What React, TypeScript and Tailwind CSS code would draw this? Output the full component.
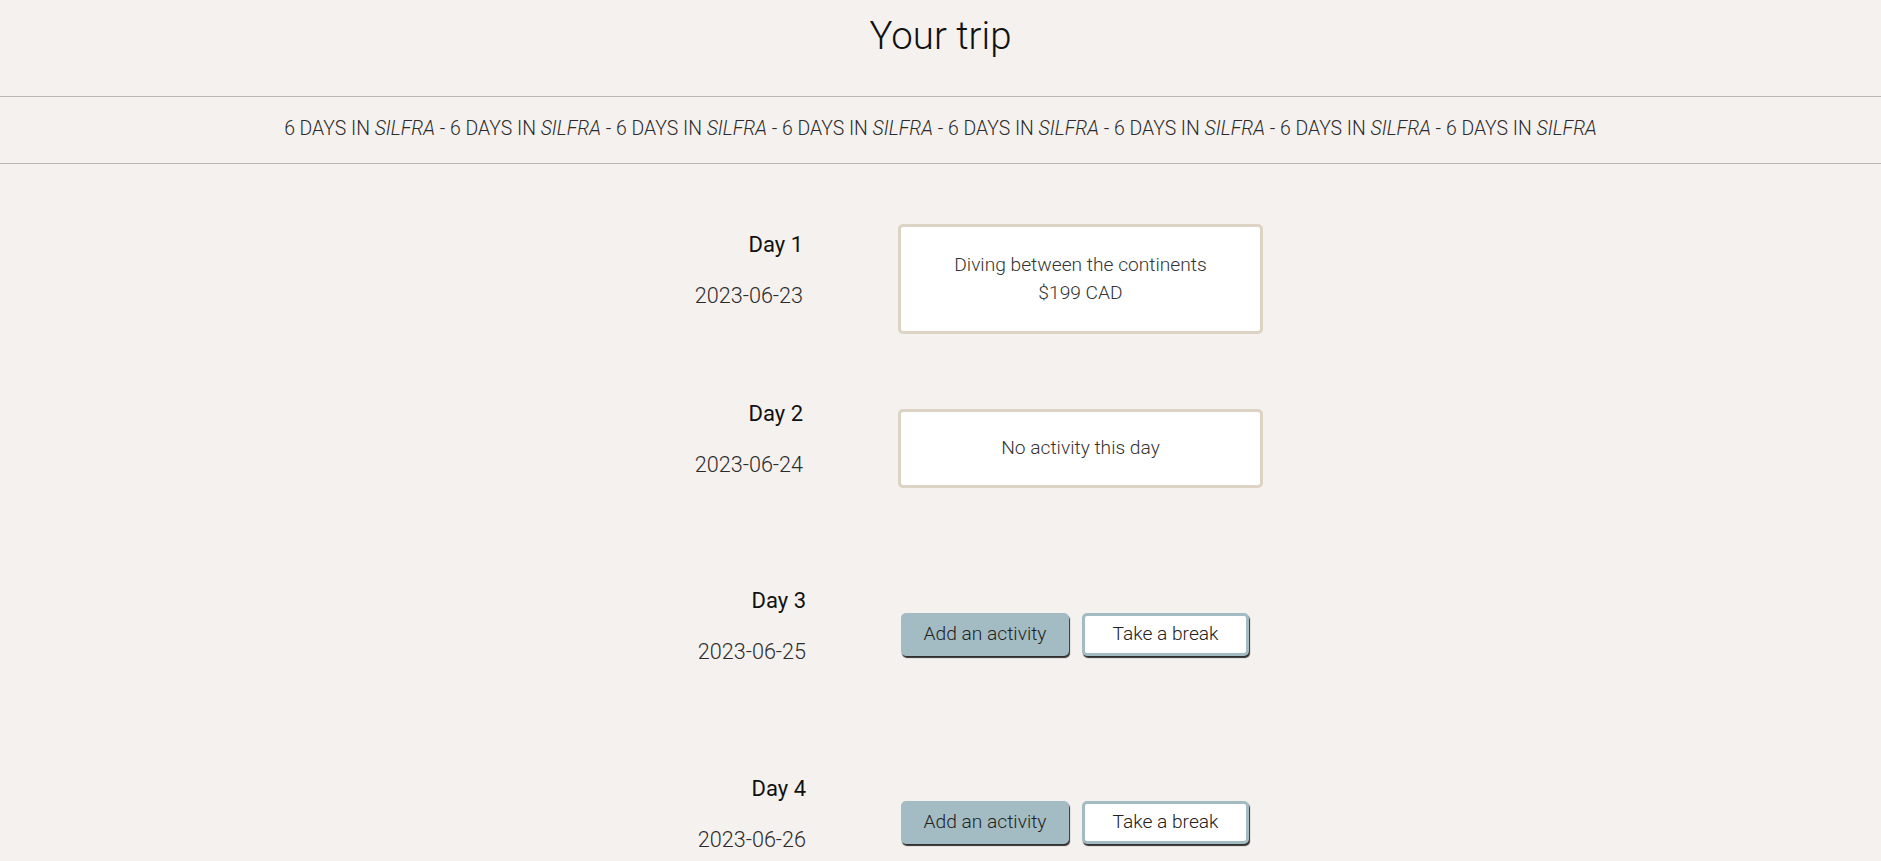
import React from "react";

type Day = {
  label: string;
  date: string;
  activity?: { title: string; price: string };
  empty?: boolean;
  gap: string;
};

const days: Day[] = [
  {
    label: "Day 1",
    date: "2023-06-23",
    activity: { title: "Diving between the continents", price: "$199 CAD" },
    gap: "mt-0",
  },
  { label: "Day 2", date: "2023-06-24", empty: true, gap: "mt-[66px]" },
  { label: "Day 3", date: "2023-06-25", gap: "mt-[91px]" },
  { label: "Day 4", date: "2023-06-26", gap: "mt-[92px]" },
  { label: "Day 5", date: "2023-06-27", gap: "mt-[92px]" },
  { label: "Day 6", date: "2023-06-28", gap: "mt-[92px]" },
];

function DayLabel({ label, date }: { label: string; date: string }) {
  return (
    <div className="w-[185px] shrink-0 text-right mb-[17px]">
      <h3 className="text-[22px] leading-[28px] font-normal text-[#111]">{label}</h3>
      <p className="mt-[23px] text-[21.6px] leading-[28px] font-light text-[#2b2b2b]">{date}</p>
    </div>
  );
}

function DayRow({ day }: { day: Day }) {
  return (
    <div className={`flex items-center justify-center ${day.gap}`}>
      <DayLabel label={day.label} date={day.date} />
      <div className="ml-[95px]">
        {day.activity ? (
          <div className="w-[365px] h-[110px] flex flex-col items-center justify-center bg-white border-[3px] border-[#ddd3c3] rounded-[5px] text-[19.2px] leading-[28px] font-light text-[#333]">
            <p>{day.activity.title}</p>
            <p>{day.activity.price}</p>
          </div>
        ) : day.empty ? (
          <div className="w-[365px] h-[79px] flex items-center justify-center bg-white border-[3px] border-[#ddd3c3] rounded-[5px] text-[19.2px] leading-[28px] font-light text-[#333]">
            No activity this day
          </div>
        ) : (
          <div className="w-[359px] flex gap-[13px] pb-[2px]">
            <button className="w-[168px] h-[43px] rounded-[5px] bg-[#a3bcc3] border-[3px] border-[#a3bcc3] shadow-[1px_2px_1px_rgba(0,0,0,0.8)] text-[19.2px] font-light text-[#222]">
              Add an activity
            </button>
            <button className="w-[167px] h-[43px] rounded-[5px] bg-white border-[3px] border-[#a3bcc3] shadow-[1px_2px_1px_rgba(0,0,0,0.8)] text-[19.2px] font-light text-[#222]">
              Take a break
            </button>
          </div>
        )}
      </div>
    </div>
  );
}

export default function App() {
  const repeat = Array.from({ length: 8 });
  return (
    <div className="min-h-screen bg-[#f5f1ee] font-[family-name:Roboto,sans-serif] text-[#222]">
      <header className="h-[97px] pt-[16px] border-b border-[#bab6b3] text-center">
        <h1 className="text-[38.4px] leading-[40px] font-light text-[#111]">Your trip</h1>
      </header>
      <div className="h-[67px] pt-[18px] border-b border-[#bab6b3] text-center text-[19.4px] leading-[28px] font-light text-[#2b2b2b] whitespace-nowrap overflow-hidden">
        {repeat.map((_, i) => (
          <span key={i}>
            {i > 0 && " - "}6 DAYS IN <em>SILFRA</em>
          </span>
        ))}
      </div>
      <main className="pt-[60px] pb-[60px]">
        {days.map((d) => (
          <DayRow key={d.label} day={d} />
        ))}
      </main>
    </div>
  );
}
